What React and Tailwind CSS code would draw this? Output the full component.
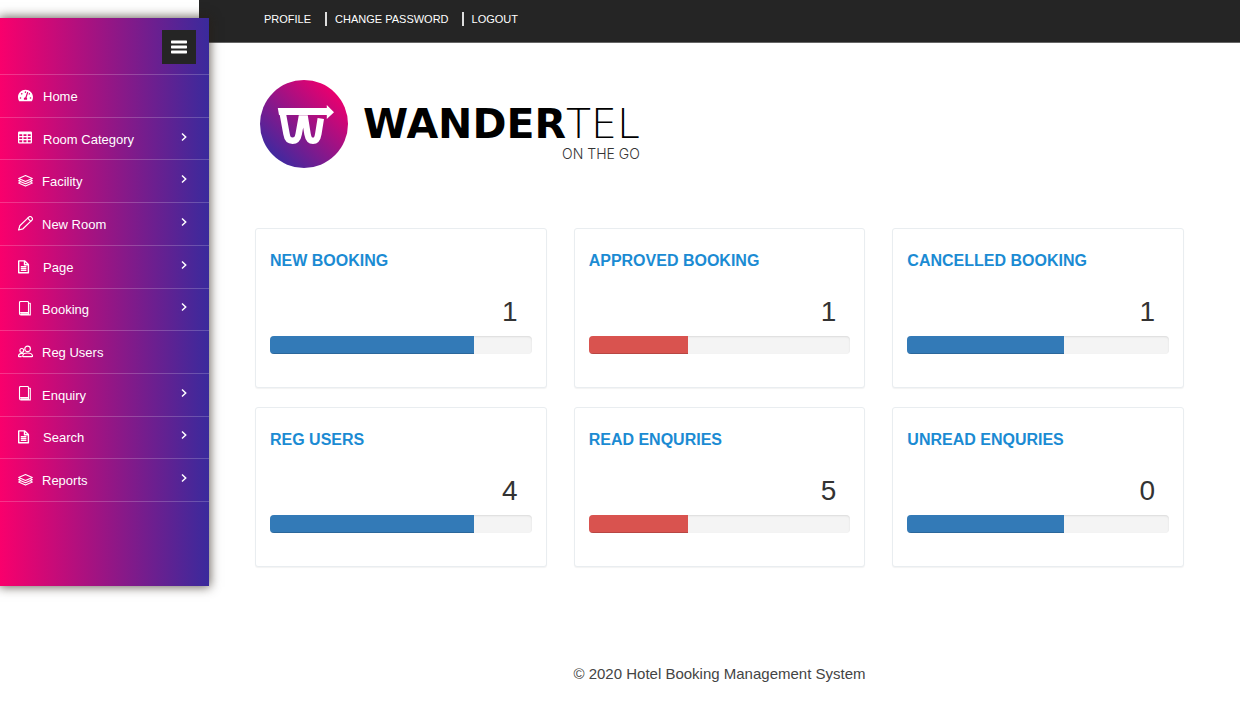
import React from "react";
import { FaTachometerAlt } from "react-icons/fa";

function LayersIcon() {
  return (
    <svg viewBox="0 0 15 15" className="size-[15px]" fill="none" stroke="currentColor" strokeWidth="1.100" strokeLinejoin="round" strokeLinecap="round">
      <path d="M7.500 1.500 14.300 4.500 7.500 7.500 0.700 4.500Z" />
      <path d="M2 6.100 0.700 6.800 7.500 9.800 14.300 6.800 13 6.100" />
      <path d="M2 8.400 0.700 9.100 7.500 12.100 14.300 9.100 13 8.400" />
    </svg>
  );
}

function PencilIcon() {
  return (
    <svg viewBox="0 0 15 15" className="size-[15px]" fill="none" stroke="currentColor" strokeWidth="1.200" strokeLinejoin="round" strokeLinecap="round">
      <path d="M0.600 14 1.800 9.800 10.800 1.100C11.600 0.300 12.800 0.400 13.700 1.300 14.600 2.200 14.700 3.400 13.900 4.200L5 12.800Z" />
      <path d="M9.700 2.200 12.800 5.300" />
    </svg>
  );
}

function BookIcon() {
  return (
    <svg viewBox="0 0 15 15" className="mb-0.5 size-[15px]" fill="none" stroke="currentColor" strokeWidth="1.100" strokeLinejoin="round">
      <path d="M2.500 0.500H9.500C10 0.500 10.500 0.800 10.500 1.500V11.500H3C2 11.500 1.500 12 1.500 12.500V1.500C1.500 0.800 2 0.500 2.500 0.500Z" />
      <path d="M1.500 12.500C1.500 13.500 2 13.900 3 13.900H12.300V2.200H10.800M2.600 12.700H10.500V11.500" />
    </svg>
  );
}

function UsersIcon() {
  return (
    <svg viewBox="0 0 15 15" className="size-[15px]" fill="none" stroke="currentColor" strokeWidth="1.200" strokeLinejoin="round" strokeLinecap="round">
      <circle cx="9.600" cy="3.900" r="2.800" />
      <path d="M5.200 11.600C4.700 11.600 4.600 11.300 4.700 10.900 5 8.800 7.200 8 9.600 8S14.200 8.800 14.500 10.900C14.600 11.300 14.400 11.600 14 11.600Z" />
      <circle cx="3.800" cy="5.400" r="1.900" />
      <path d="M3.300 11.600H0.900C0.500 11.600 0.400 11.300 0.500 10.900 0.800 9.100 2 8.300 3.800 8.300 4.400 8.300 4.900 8.400 5.200 8.500" />
    </svg>
  );
}

function FileIcon() {
  return (
    <svg viewBox="0 0 12 14" className="h-[14px] w-[12px]" fill="none" stroke="currentColor" strokeWidth="1.400" strokeLinejoin="round">
      <path d="M0.700 0.900H6.800L10.400 4.500V12.700H0.700Z" />
      <path d="M6.500 0.900V4.800H10.400M2.800 6.600H8.400M2.800 8.500H8.400M2.800 10.400H8.400" />
    </svg>
  );
}

function TableIcon() {
  return (
    <svg viewBox="0 0 14 13" className="mb-0.5 h-[13px] w-[14px]" fill="currentColor">
      <path fillRule="evenodd" d="M1.200 0.500H12.800Q14 0.500 14 1.700V11.300Q14 12.500 12.800 12.500H1.200Q0 12.500 0 11.300V1.700Q0 0.500 1.200 0.500ZM1.300 3.200V5H4.200V3.200ZM5.500 3.200V5H8.500V3.200ZM9.800 3.200V5H12.700V3.200ZM1.300 6.200V8H4.200V6.200ZM5.500 6.200V8H8.500V6.200ZM9.800 6.200V8H12.700V6.200ZM1.300 9.200V11.200H4.200V9.200ZM5.500 9.200V11.200H8.500V9.200ZM9.800 9.200V11.200H12.700V9.200Z" />
    </svg>
  );
}

function BarsIcon() {
  return (
    <svg viewBox="0 0 16 14" className="h-[14px] w-[16px]" fill="currentColor">
      <rect x="0" y="0.500" width="16" height="3" rx="0.700" />
      <rect x="0" y="5.500" width="16" height="3" rx="0.700" />
      <rect x="0" y="10.500" width="16" height="3" rx="0.700" />
    </svg>
  );
}

function ArrowIcon() {
  return (
    <svg viewBox="0 0 6 10" className="mb-1 h-[10px] w-[6px]" fill="none" stroke="currentColor" strokeWidth="1.500">
      <path d="M1 1.500 4.700 5 1 8.500" />
    </svg>
  );
}

const menu = [
  { label: "Home", icon: <FaTachometerAlt className="size-[15px]" />, wide: true, arrow: false },
  { label: "Room Category", icon: <TableIcon />, wide: true, arrow: true },
  { label: "Facility", icon: <LayersIcon />, wide: false, arrow: true },
  { label: "New Room", icon: <PencilIcon />, wide: false, arrow: true },
  { label: "Page", icon: <FileIcon />, wide: true, arrow: true },
  { label: "Booking", icon: <BookIcon />, wide: false, arrow: true },
  { label: "Reg Users", icon: <UsersIcon />, wide: false, arrow: false },
  { label: "Enquiry", icon: <BookIcon />, wide: false, arrow: true },
  { label: "Search", icon: <FileIcon />, wide: true, arrow: true },
  { label: "Reports", icon: <LayersIcon />, wide: false, arrow: true },
];

const stats = [
  { title: "NEW BOOKING", value: 1, percent: 78, bar: "bg-[#337ab7]" },
  { title: "APPROVED BOOKING", value: 1, percent: 38, bar: "bg-[#d9534f]" },
  { title: "CANCELLED BOOKING", value: 1, percent: 60, bar: "bg-[#337ab7]" },
  { title: "REG USERS", value: 4, percent: 78, bar: "bg-[#337ab7]" },
  { title: "READ ENQURIES", value: 5, percent: 38, bar: "bg-[#d9534f]" },
  { title: "UNREAD ENQURIES", value: 0, percent: 60, bar: "bg-[#337ab7]" },
];

function Sidebar() {
  return (
    <aside className="z-10 mt-[18px] -mr-[10px] flex min-h-[568px] w-[209px] shrink-0 flex-col self-start bg-linear-to-r/srgb from-[#f9006c] to-[#3a2a9c] text-white shadow-[0_0_10px_1px_rgba(40,30,20,0.7)]">
      <div className="flex h-[56px] justify-end pt-3 pr-[13px]">
        <button type="button" aria-label="Toggle menu" className="flex size-[34px] items-center justify-center bg-[#252525]">
          <BarsIcon />
        </button>
      </div>
      <ul className="grid min-h-[428px] auto-rows-fr border-t border-white/20">
        {menu.map((item) => (
          <li key={item.label} className="border-b border-white/20">
            <a href="#" className="flex h-full items-center pr-[22px] pl-[18px] text-[13px] leading-5">
              <span className={item.wide ? "w-[25px]" : "w-[24px]"}>{item.icon}</span>
              <span className="flex-1 pt-0.5">{item.label}</span>
              {item.arrow && <ArrowIcon />}
            </a>
          </li>
        ))}
      </ul>
    </aside>
  );
}

function Logo() {
  return (
    <a href="#" className="flex w-fit items-center gap-[15px]">
      <svg viewBox="0 0 88 88" className="size-[88px]" aria-hidden="true">
        <defs>
          <linearGradient id="brand" x1="0.150" y1="0.900" x2="0.850" y2="0.150">
            <stop offset="0" stopColor="#3c2aa0" />
            <stop offset="1" stopColor="#e8006f" />
          </linearGradient>
        </defs>
        <circle cx="44" cy="44" r="44" fill="url(#brand)" />
        <path d="M17.800 28H66.800V25L74 32.300 66.800 39V35H26L19 35Z" fill="#fff" />
        <path d="M22.300 31 26.500 54C27.300 59 29 60.800 32.500 60.800S37.800 59 38.700 54L41.500 38.500H45L47.500 54C48.400 59 49.700 60.800 53 60.800S57.500 59 58.300 54L60.800 38.500" fill="none" stroke="#fff" strokeWidth="6.500" />
      </svg>
      <span className="flex flex-col items-end pt-4 text-black">
        <span className="flex font-['DejaVu_Sans',sans-serif] text-[41px] leading-[43px]">
          <span className="font-bold">WANDER</span>
          <span className="font-extralight">TEL</span>
        </span>
        <span className="font-[Inter,sans-serif] text-[14px] leading-4 font-light text-[#333]">ON THE GO</span>
      </span>
    </a>
  );
}

function StatCard({ title, value, percent, bar }) {
  return (
    <section className="flex h-[160px] flex-col rounded-[3px] border border-[#e9edf0] bg-white px-[14px] pt-[22px] shadow-[0_1px_1px_rgba(0,0,0,0.05)]">
      <h2 className="text-[16px] leading-5 font-bold text-[#1b8bd3]">{title}</h2>
      <p className="mt-[25px] pr-[14px] text-right text-[28px] leading-8 text-[#333]">{value}</p>
      <div role="progressbar" aria-label={title} aria-valuenow={percent} aria-valuemin={0} aria-valuemax={100} className="mt-2 h-[18px] overflow-hidden rounded-[4px] bg-[#f4f4f4] shadow-[inset_0_1px_2px_rgba(0,0,0,0.1)]">
        <div className={`h-full shadow-[inset_0_-1px_0_rgba(0,0,0,0.15)] ${bar}`} style={{ width: `${percent}%` }} />
      </div>
    </section>
  );
}

export default function App() {
  return (
    <div className="flex min-h-screen bg-white font-['Liberation_Sans',Arial,sans-serif]">
      <Sidebar />
      <div className="flex min-w-0 flex-1 flex-col">
        <header className="flex h-[43px] items-center border-b border-[#666] bg-[#252525] px-[65px] pb-1 text-[11px] leading-[14px] font-medium text-white">
          <a href="#">PROFILE</a>
          <a href="#" className="ml-[14px] border-l-2 border-[#ddd] pl-2">CHANGE PASSWORD</a>
          <a href="#" className="ml-[13px] border-l-2 border-[#ddd] pl-2">LOGOUT</a>
        </header>
        <main className="px-14 pt-[37px]">
          <div className="pl-[5px]">
            <Logo />
          </div>
          <div className="mt-[60px] grid grid-cols-3 gap-x-[27px] gap-y-[19px]">
            {stats.map((s) => (
              <StatCard key={s.title} {...s} />
            ))}
          </div>
        </main>
        <footer className="mt-[97px] text-center text-[15px] leading-5 text-[#444]">
          © 2020 Hotel Booking Management System
        </footer>
      </div>
    </div>
  );
}
